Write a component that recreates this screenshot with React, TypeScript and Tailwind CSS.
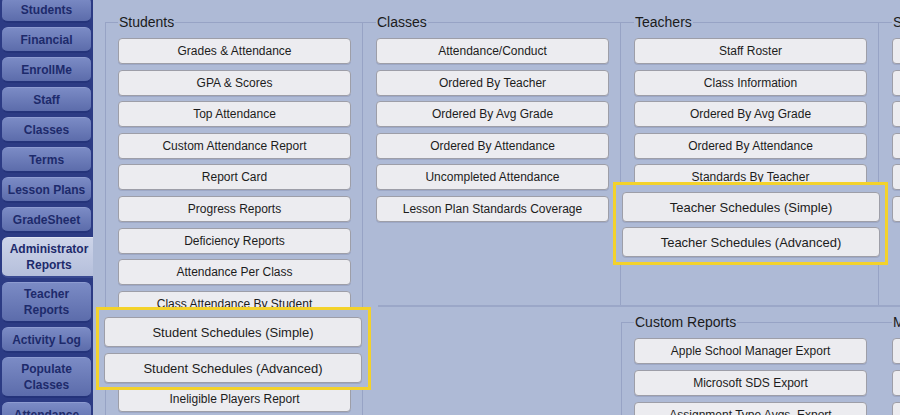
import React from "react";

type Tab = { lines: string[]; selected?: boolean };

const tabs: Tab[] = [
  { lines: ["Students"] },
  { lines: ["Financial"] },
  { lines: ["EnrollMe"] },
  { lines: ["Staff"] },
  { lines: ["Classes"] },
  { lines: ["Terms"] },
  { lines: ["Lesson Plans"] },
  { lines: ["GradeSheet"] },
  { lines: ["Administrator", "Reports"], selected: true },
  { lines: ["Teacher", "Reports"] },
  { lines: ["Activity Log"] },
  { lines: ["Populate", "Classes"] },
  { lines: ["Attendance"] },
];

function SideTab({ tab }: { tab: Tab }) {
  const tall = tab.lines.length > 1;
  const base =
    "flex shrink-0 flex-col items-center justify-center text-center font-bold text-[12px] leading-[16px] text-[#1d2a6b] border-b-2 border-t border-t-[#8d9bd0]";
  const size = tall ? "h-[41px]" : "h-[26px]";
  const look = tab.selected
    ? "w-[94px] rounded-l-[6px] bg-linear-to-b from-[#cdd4e9] to-[#b5bfdb] border-b-[#3a4a92] border-t-[#dfe4f2]"
    : "w-[89px] rounded-[6px] bg-linear-to-b from-[#7b8bc5] to-[#5c6cab] border-b-[#24337a]";
  return (
    <div className={`${base} ${size} ${look}`}>
      {tab.lines.map((l) => (
        <span key={l}>{l}</span>
      ))}
    </div>
  );
}

function Btn({ label }: { label: string }) {
  return (
    <div className="flex h-[26px] w-[233px] shrink-0 items-center justify-center whitespace-nowrap rounded-[4px] border border-[#9d9ea8] bg-[#ececf0] text-[12px] leading-none text-[#1c1c1c] shadow-[0_1px_0_rgba(60,70,110,0.15)]">
      {label}
    </div>
  );
}

function BigBtn({ label }: { label: string }) {
  return (
    <div className="flex h-[30px] w-full shrink-0 items-center justify-center whitespace-nowrap rounded-[4px] border border-[#9d9ea8] bg-[#ebebef] text-[13px] leading-none text-[#1c1c1c] shadow-[0_1px_0_rgba(60,70,110,0.15)]">
      {label}
    </div>
  );
}

function Legend({ text }: { text: string }) {
  return (
    <legend className="whitespace-nowrap px-[1px] text-[14px] leading-[16px] text-[#1b1b1b]">
      {text}
    </legend>
  );
}

function Buttons({ items, gap }: { items: string[]; gap: string }) {
  return (
    <div className={`flex flex-col ${gap}`}>
      {items.map((b, i) => (
        <Btn key={i} label={b} />
      ))}
    </div>
  );
}

const line = "border-[#97a3c5]";

export default function App() {
  return (
    <div className="relative flex h-[415px] w-[900px] overflow-hidden font-['Liberation_Sans',Arial,sans-serif]">
      {/* Sidebar */}
      <div className="flex w-[93px] shrink-0 flex-col gap-[4px] overflow-visible bg-[#2c3b84] pl-[2px]">
        <div className="-mt-[3px]" />
        {tabs.map((t, i) => (
          <div key={i} className={i === 0 ? "-mt-[4px] shrink-0" : "shrink-0"}>
            <SideTab tab={t} />
          </div>
        ))}
      </div>

      {/* Main */}
      <div className="flex flex-1 bg-[#aebad6] pl-[12px] pt-[14px]">
        <fieldset className={`h-[430px] w-[258px] shrink-0 border-l border-r border-t ${line} pl-[12px] pr-[11px] pt-[8px]`}>
          <Legend text="Students" />
          <Buttons
            gap="gap-[5.6px]"
            items={[
              "Grades & Attendance",
              "GPA & Scores",
              "Top Attendance",
              "Custom Attendance Report",
              "Report Card",
              "Progress Reports",
              "Deficiency Reports",
              "Attendance Per Class",
              "Class Attendance By Student",
              "Student Schedules (Simple)",
              "Student Schedules (Advanced)",
              "Ineligible Players Report",
            ]}
          />
        </fieldset>

        <div className="flex shrink-0 flex-col">
          <div className="flex h-[291px] shrink-0">
            <fieldset className={`h-full w-[258px] shrink-0 border-r border-t ${line} pl-[13px] pr-[11px] pt-[8px]`}>
              <Legend text="Classes" />
              <Buttons
                gap="gap-[5.6px]"
                items={[
                  "Attendance/Conduct",
                  "Ordered By Teacher",
                  "Ordered By Avg Grade",
                  "Ordered By Attendance",
                  "Uncompleted Attendance",
                  "Lesson Plan Standards Coverage",
                ]}
              />
            </fieldset>
            <fieldset className={`h-full w-[258px] shrink-0 border-r border-t ${line} pl-[13px] pr-[11px] pt-[8px]`}>
              <Legend text="Teachers" />
              <Buttons
                gap="gap-[5.6px]"
                items={[
                  "Staff Roster",
                  "Class Information",
                  "Ordered By Avg Grade",
                  "Ordered By Attendance",
                  "Standards By Teacher",
                  "Teacher Schedules (Simple)",
                  "Teacher Schedules (Advanced)",
                ]}
              />
            </fieldset>
            <fieldset className={`h-full w-[258px] shrink-0 border-t ${line} pl-[13px] pr-[11px] pt-[8px]`}>
              <Legend text="Scheduling" />
              <Buttons
                gap="gap-[5.6px]"
                items={[
                  "Master Schedule",
                  "Schedule Conflicts",
                  "Room Usage",
                  "Section Sizes",
                  "Course Requests",
                  "Open Periods",
                ]}
              />
            </fieldset>
          </div>

          <div className="ml-[15px] h-[2px] shrink-0 bg-[#9ba7c8]" />

          <div className="mt-[7px] flex shrink-0">
            <div className="w-[258px] shrink-0" />
            <fieldset className={`h-[120px] w-[258px] shrink-0 border-l border-t ${line} pl-[12px] pr-[12px] pt-[8px]`}>
              <Legend text="Custom Reports" />
              <Buttons
                gap="gap-[6px]"
                items={[
                  "Apple School Manager Export",
                  "Microsoft SDS Export",
                  "Assignment Type Avgs. Export",
                ]}
              />
            </fieldset>
            <fieldset className={`h-[120px] w-[258px] shrink-0 border-t ${line} pl-[13px] pr-[11px] pt-[8px]`}>
              <Legend text="Miscellaneous" />
              <Buttons
                gap="gap-[6px]"
                items={["Mailing Labels", "Emergency Contacts", "Birthdays"]}
              />
            </fieldset>
          </div>
        </div>
      </div>

      {/* Highlight annotations */}
      <div className="absolute left-[96px] top-[307px] flex h-[83px] w-[275px] flex-col gap-[6px] border-[3px] border-[#f3d22b] bg-[#aebad6] pl-[5px] pr-[6px] pt-[7px]">
        <BigBtn label="Student Schedules (Simple)" />
        <BigBtn label="Student Schedules (Advanced)" />
      </div>
      <div className="absolute left-[613px] top-[182px] flex h-[83px] w-[275px] flex-col gap-[5px] border-[3px] border-[#f3d22b] bg-[#aebad6] pl-[6px] pr-[5px] pt-[7px]">
        <BigBtn label="Teacher Schedules (Simple)" />
        <BigBtn label="Teacher Schedules (Advanced)" />
      </div>
    </div>
  );
}
